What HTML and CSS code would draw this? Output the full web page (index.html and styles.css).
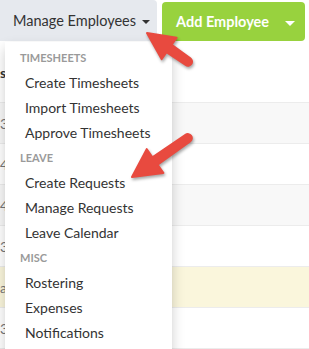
FILE: index.html
```html
<!DOCTYPE html>
<html lang="en">
<head>
    <meta charset="UTF-8">
    <meta name="viewport" content="width=device-width, initial-scale=1.0">
    <title>Manage Employees</title>
    <link rel="stylesheet" href="styles.css">
</head>
<body>
    <div class="page">
        <div class="toolbar">
            <div class="btn-group">
                <button class="btn btn-manage">Manage Employees <span class="caret"></span></button>

                <ul class="dropdown-menu">
                    <li class="dropdown-header">Timesheets</li>
                    <li><a href="#">Create Timesheets</a></li>
                    <li><a href="#">Import Timesheets</a></li>
                    <li><a href="#">Approve Timesheets</a></li>
                    <li class="dropdown-header">Leave</li>
                    <li><a href="#">Create Requests</a></li>
                    <li><a href="#">Manage Requests</a></li>
                    <li><a href="#">Leave Calendar</a></li>
                    <li class="dropdown-header">Misc</li>
                    <li><a href="#">Rostering</a></li>
                    <li><a href="#">Expenses</a></li>
                    <li><a href="#">Notifications</a></li>
                </ul>
            </div>

            <div class="btn-group btn-group-add">
                <button class="btn btn-add">Add Employee</button>
                <button class="btn btn-add-toggle"><span class="caret caret-white"></span></button>
            </div>
        </div>

        <div class="roster">
            <div class="roster-head"><span class="cell-text">s</span></div>
            <div class="roster-row striped"><span class="cell-text">3/</span></div>
            <div class="roster-row"><span class="cell-text">4/</span></div>
            <div class="roster-row striped"><span class="cell-text">4/</span></div>
            <div class="roster-row"><span class="cell-text">3/</span></div>
            <div class="roster-row warning"><span class="cell-text">a</span></div>
            <div class="roster-row"><span class="cell-text">3/</span></div>
        </div>

        <svg class="annotations" width="309" height="349" viewBox="0 0 309 349">
            <path class="arrow" d="M147 33 L176.6 37.8 L171.7 44.8 L190.3 58.4 A4 4 0 0 1 185.7 65 L166.5 52.2 L161.6 59.1 Z"/>
            <path class="arrow" d="M132 177 L146.7 149.1 L152.4 157.3 L185.5 134.8 A4 4 0 0 1 190.1 141.4 L157.6 164.7 L163.3 172.9 Z"/>
        </svg>
    </div>
</body>
</html>
```

FILE: styles.css
```css
body {
    margin: 0;
    background-color: white;
    font-family: Lato, 'Open Sans', sans-serif;
    color: #333;
}

.page {
    position: relative;
    width: 309px;
    height: 349px;
    overflow: hidden;
}

.toolbar {
    display: flex;
    gap: 5px;
    align-items: flex-start;
}

.btn-group {
    position: relative;
    display: flex;
}

.btn {
    border: none;
    font-family: inherit;
    font-size: 15px;
    white-space: nowrap;
    cursor: pointer;
}

.btn-manage {
    width: 157px;
    height: 41px;
    padding: 0 0 0 13px;
    text-align: left;
    font-size: 14.5px;
    background-color: #e6e9ee;
    color: #333;
    border-radius: 0 4px 0 0;
}

.btn-group-add {
    margin-top: 2px;
    background-color: #98d23e;
    border-radius: 4px;
}

.btn-add {
    width: 112px;
    height: 39px;
    padding: 0 0 0 14px;
    text-align: left;
    font-size: 14.5px;
    background: none;
    color: white;
    font-weight: bold;
}

.btn-add-toggle {
    width: 31px;
    height: 39px;
    padding: 0 2px 0 0;
    background: none;
}

.caret {
    display: inline-block;
    width: 0;
    height: 0;
    margin-left: 2px;
    vertical-align: middle;
    border-top: 4px solid #333;
    border-left: 4px solid transparent;
    border-right: 4px solid transparent;
}

.caret-white {
    border-top: 5px solid white;
    border-left: 5px solid transparent;
    border-right: 5px solid transparent;
}

.dropdown-menu {
    position: absolute;
    top: 42px;
    left: 5px;
    z-index: 2;
    width: 167px;
    margin: 0;
    padding: 3px 0 0;
    height: 320px;
    list-style: none;
    background-color: white;
    box-shadow: 0 6px 12px rgba(0, 0, 0, 0.2);
}

.dropdown-menu li {
    line-height: 25px;
}

.dropdown-header {
    padding-left: 15px;
    font-size: 11px;
    font-weight: bold;
    text-transform: uppercase;
    color: #9a9a9a;
}

.dropdown-menu a {
    display: block;
    padding-left: 20px;
    font-size: 14px;
    color: #333;
    text-decoration: none;
}

.roster {
    margin-top: 1px;
    border-bottom: 1px solid #ececec;
}

.roster-head,
.roster-row {
    display: flex;
    align-items: center;
    border-top: 1px solid #ececec;
}

.roster-head {
    height: 60px;
    border-top: none;
    font-weight: bold;
    font-size: 14px;
}

.roster-row {
    height: 40px;
    color: #777;
    font-size: 14px;
}

.roster-row.striped {
    background-color: #f8f8f8;
}

.roster-row.warning {
    background-color: #faf6dc;
}

.cell-text {
    padding-left: 0;
}

.annotations {
    position: absolute;
    top: 0;
    left: 0;
    z-index: 3;
    pointer-events: none;
}

.arrow {
    fill: #e84a3f;
    stroke: #e84a3f;
    stroke-width: 2;
    stroke-linejoin: round;
    filter: drop-shadow(1px 2px 1.5px rgba(0, 0, 0, 0.35));
}
```
